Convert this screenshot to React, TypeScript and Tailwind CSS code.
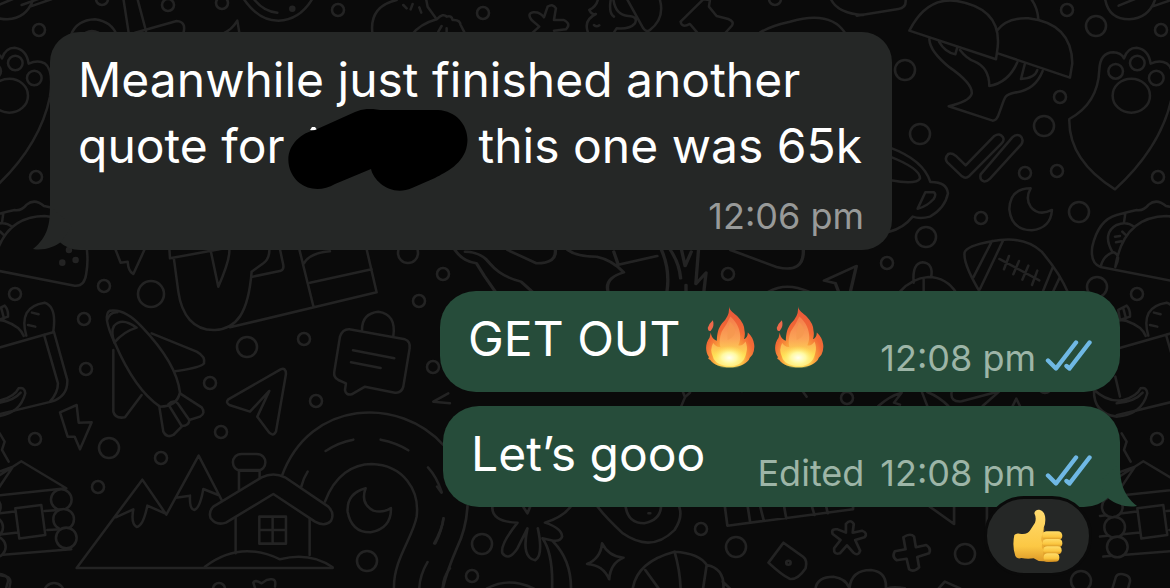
import { ReactNode } from "react";
import clsx from "clsx";

const DOTS = [
  [39, 30, 6], [102, -1, 6], [168, 5, 6], [222, 3, 6], [338, 10, 6], [36, 177, 6],
  [104, 286, 6], [15, 294, 6], [151, 294, 13], [84, 319, 6], [86, 369, 6], [35, 439, 6],
  [109, 448, 10], [161, 458, 6], [98, 487, 6], [247, 347, 10], [304, 339, 6], [210, 383, 6],
  [221, 432, 6], [316, 401, 6], [408, 253, 10], [443, 274, 6], [419, 301, 6], [433, 367, 6],
  [367, 561, 10], [54, 593, 10], [219, 589, 6], [482, 544, 10], [472, 576, 6], [701, 529, 6],
  [736, 547, 10], [965, 554, 10], [483, 13, 6], [775, -1, 6], [728, 274, 6], [847, 398, 6],
  [1067, 10, 6], [1096, 26, 10], [905, 70, 10], [1060, 97, 6], [1044, 126, 10], [920, 134, 10],
  [1025, 173, 6], [1057, 171, 6], [981, 218, 6], [1079, 212, 10], [926, 237, 10], [887, 263, 6],
  [1097, 287, 10], [1137, 294, 6], [1157, 439, 6], [1161, 30, 6], [1158, 177, 6], [1081, 581, 10],
  [742, 385, 6], [1045, 387, 6],
];

// doodles that sit on the seam of the tile, so they are drawn on both edges
const SeamDoodles = () => (
  <g>
    {/* paw */}
    <path d="M628 357Q714 310 718 210Q720 158 760 157Q783 158 792 175Q802 143 830 143Q866 148 872 191Q900 178 920 190Q948 210 936 290Q905 440 765 568Q625 480 628 357Z" />
    <circle cx="767" cy="214" r="22" />
    <circle cx="832" cy="189" r="22" />
    <circle cx="889" cy="234" r="22" />
    <ellipse cx="814" cy="287" rx="56" ry="51" />
    <path d="M735 -5Q745 58 808 58Q865 55 885 0M776 17L830 -5M876 20L940 -2" />
    {/* taco */}
    <path d="M722 801Q690 790 697 740Q715 660 770 645Q795 638 830 630Q850 634 866 614Q890 594 918 618Q960 625 1010 650M722 801L1010 857Q1040 860 1045 820Q1052 780 1045 735M766 801Q790 650 920 648Q990 655 1030 710M722 801Q730 765 760 757Q785 765 766 801M796 640L792 668M758 757Q725 700 770 675Q800 662 822 680M765 710L780 708M787 695L796 704M768 727L784 724" />
    <circle cx="973" cy="788" r="6" fill="#232323" />
    <circle cx="1013" cy="780" r="6" fill="#232323" />
    <circle cx="993" cy="750" r="6" fill="#232323" />
    {/* grocery bag */}
    <path d="M600 1095L948 996L988 1140Q990 1190 940 1205L770 1246M918 1004L960 1150Q960 1180 935 1206M865 1007Q840 920 920 908Q957 920 946 995M882 938L902 943M870 975L892 980M857 1008Q848 980 800 963Q750 950 715 1018M775 930L800 917Q812 930 810 950L780 960ZM790 925L798 955" />
    <path d="M700 1168Q745 1210 790 1200Q830 1190 842 1165Q860 1160 862 1180Q845 1245 770 1250Q700 1240 702 1170M770 1210Q825 1205 848 1178M780 1190L766 1130" />
    {/* steam and cabin */}
    <path d="M785 1300L800 1325L792 1350L812 1385M720 1438L825 1400L785 1460M700 1480L850 1384L985 1465L710 1494M720 1548L830 1535M920 1533L965 1530M720 1610L840 1598M928 1590L970 1588M730 1670L1000 1648M832 1525L910 1515L922 1605L844 1616Z" />
    {[
      [757, 1521], [764, 1582], [772, 1641], [970, 1499], [977, 1558], [985, 1614],
    ].map(([cx, cy]) => (
      <circle key={cy} cx={cx} cy={cy} r="31" fill="#0a0a0a" />
    ))}
    <path d="M756 1770L768 1730Q775 1718 797 1725Q812 1730 810 1745L800 1780" />
  </g>
);

const Wallpaper = () => (
  <svg
    aria-hidden="true"
    className="absolute left-0 top-0 h-[588px] w-[1170px]"
    viewBox="0 0 1170 588"
    fill="none"
    stroke="#232323"
    strokeWidth="2.6"
    strokeLinecap="round"
    strokeLinejoin="round"
  >
    {DOTS.map(([cx, cy, r]) => (
      <circle key={`${cx}-${cy}`} cx={cx} cy={cy} r={r} />
    ))}
    <g strokeWidth="7.6">
      <g transform="translate(860 0) scale(.3333)">
        <SeamDoodles />
        {/* mushrooms */}
        <path d="M148 92Q200 -10 290 3Q425 25 413 142L408 178ZM410 93Q440 52 505 55Q635 70 637 190L630 233L416 161M208 118Q210 155 270 203Q340 252 335 282Q328 305 266 319L398 362Q411 362 418 338C435 295 430 285 462 278Q525 272 548 213M300 150Q320 176 343 184Q388 203 388 258Q445 248 472 187M237 125Q255 157 286 163L291 145M494 194L483 237Q525 235 532 210M512 -5Q532 20 535 57" />
        {/* double check */}
        <path d="M262 487Q252 475 265 462Q275 458 287 467L317 496L403 408Q419 397 429 412Q434 421 425 430L328 528Q317 538 306 529ZM362 523Q358 540 371 544Q380 546 390 536L484 433Q493 418 481 408Q468 401 457 412Z" />
        {/* moon */}
        <path d="M512 565Q450 565 448 628Q455 690 515 691Q572 685 576 630Q535 650 512 620Q495 595 512 565Z" />
        {/* tea cup */}
        <path d="M90 443Q190 480 211 546Q260 545 264 580Q255 625 210 650Q180 658 158 650Q130 685 88 695M90 470Q180 505 180 535Q170 555 92 541M196 577H222Q230 582 221 597Q200 620 173 626Z" />
        {/* football */}
        <path d="M362 880Q308 790 314 757Q320 738 395 724Q490 705 545 755Q600 820 625 880M340 832L396 723M360 867L429 722M548 876L579 800M577 880L599 833M418 777L538 841M447 768L432 808M477 783L460 823M505 797L487 839M532 812L516 855" />
        <path d="M161 848Q156 790 188 787Q220 790 214 830M120 875Q155 835 205 831Q260 832 290 880M191 838V880" />
        <path d="M-10 47L115 27Q139 24 137 0" />
      </g>
      <g transform="translate(-262 0) scale(.3333)">
        <SeamDoodles />
      </g>
      <g transform="scale(.3333)">
        {/* top edge */}
        <path d="M213 105Q230 60 285 58Q335 65 350 105M258 98Q275 88 295 98M370 -5L386 98M412 -5L438 93M405 98L530 63Q560 65 550 100M670 100Q695 90 712 62L718 98M730 -5Q775 62 835 62Q900 60 938 -5M760 -5Q790 35 832 38M1118 105Q1105 20 1190 0M65 15L120 -5" />
        <circle cx="877" cy="26" r="6" fill="#232323" />
        <path d="M1235 105Q1260 72 1310 58L1283 20L1278 -5M1310 58Q1330 38 1340 50Q1355 45 1358 60Q1380 58 1382 75L1395 100M1210 15L1220 25M1238 12L1232 28M1258 22L1264 38M1325 78L1315 95M1340 85V98" />
        <path d="M1598 98L1618 80L1595 60Q1580 40 1600 37Q1620 35 1632 52L1643 20Q1660 10 1668 25L1662 60H1692Q1715 72 1698 88L1662 92" />
        <path d="M1795 -5Q1790 20 1768 30Q1775 45 1788 42Q1750 60 1764 97M1782 75Q1790 82 1798 76M1833 -5Q1825 40 1842 50M1840 -5Q1845 45 1885 48Q1915 50 1905 70Q1890 88 1850 85L1842 97M1880 -5L1930 85Q1940 98 1950 90Q1995 55 1980 0" />
        <path d="M2092 98L2070 72Q2045 85 2042 65L2110 -2L2130 0L2127 20L2150 48L2185 57Q2205 65 2195 78L2175 100M2280 98Q2310 78 2370 65Q2490 30 2535 98M2492 -5Q2510 40 2590 45" />
      </g>
      <g transform="translate(0 240) scale(.3333)">
        {/* below the first bubble */}
        <path d="M345 25L362 68L383 65Q385 95 400 102L434 28M508 25L510 55L690 22M522 58L535 155C545 225 580 272 645 270C710 266 745 220 755 95M633 36L655 140Q690 60 688 30M755 95L790 70Q810 55 808 25M758 110L843 92Q852 88 850 75L840 28M690 262L1130 157L1100 28M898 28L940 198M912 70Q930 38 990 34M930 128L1115 88" />
        {/* rocket */}
        <path d="M455 280L590 335Q617 350 612 370Q605 382 525 394M340 330V515Q345 537 375 532L425 465M478 500L490 575Q500 595 520 585L545 560M540 460L605 502Q618 520 600 530L568 540" />
        <path fill="#0a0a0a" d="M345 310Q305 225 330 212Q375 205 425 260Q530 370 540 458Q530 500 480 500Q405 450 345 310Z" />
        <path d="M321 240Q330 215 352 217M343 308Q370 275 410 263Q365 230 342 258Q332 275 343 308M505 493Q520 478 533 490L568 540Q568 558 545 558Z" />
        {/* paper plane */}
        <path d="M685 478L842 388Q858 382 858 402L828 575Q820 590 808 578L772 530L808 453L750 515L688 495Q676 488 685 478Z" />
        {/* note */}
        <path d="M1086 270Q1086 220 1135 215Q1190 222 1180 290M1048 268L1215 298Q1232 304 1229 325L1210 440Q1205 460 1185 458L1095 440L1055 463Q1038 467 1035 450L1038 430L1015 420Q1000 412 1003 395L1020 290Q1028 267 1048 268ZM1059 331L1183 355M1053 367L1142 384" />
        {/* lightning */}
        <path d="M180 517L230 495L236 548L275 547L240 628L224 590H203Z" />
        {/* road */}
        <path d="M845 710C930 475 1200 470 1330 615M975 785C1005 705 1060 672 1115 672C1210 675 1260 750 1250 830C1240 890 1180 960 1182 1044M977 633Q1015 607 1060 599M1142 599Q1190 608 1225 631M904 740Q910 715 923 695M1284 682Q1310 710 1325 756M1330 836Q1325 875 1306 910M1283 966Q1260 1005 1258 1044M1350 985Q1330 1010 1328 1044" />
        {/* mountains and house */}
        <path d="M230 984L427 719L499 824L596 647L665 780M347 832L400 808Q392 850 410 861Q430 858 442 797L495 820M528 773L570 767Q568 808 583 810Q600 805 610 747L655 765M230 984H998" />
        <path fill="#0a0a0a" d="M717 750V690H779V730M725 642H770C805 642 805 692 770 692H725C690 692 690 642 725 642ZM707 830V940M929 830V945" />
        <path fill="#0a0a0a" d="M640 800L785 712Q820 695 855 712L985 800Q1005 820 993 843Q975 862 945 845L820 762L678 848Q650 858 632 835Q625 815 640 800Z" />
        <path d="M778 830H858V911H778ZM818 830V911M778 870H858M615 980Q720 900 840 958Q930 935 998 982M1097 745Q1040 760 1043 815Q1055 878 1112 877Q1175 865 1173 804Q1150 820 1120 812Q1080 790 1097 745Z" />
        <path d="M-10 1003L20 1010Q32 1013 31 1028L27 1050M765 1044L760 1028Q765 1018 785 1030L800 1020L812 1018Q830 1015 825 1040M1300 485L1345 460M1300 485L1350 490" />
      </g>
      <g transform="translate(430 480) scale(.357 .3333)">
        {/* palm, avocado and small shapes along the bottom */}
        <path d="M105 78Q102 145 75 205Q45 280 35 330M12 190Q35 145 38 115M20 20L32 38M175 78Q170 125 245 128Q195 195 203 220Q220 245 245 205L273 145Q255 235 295 241Q318 225 302 145M395 78Q375 110 322 128Q370 145 370 170Q365 185 345 182L315 175Q345 220 342 325M345 185Q395 240 395 325M262 82L273 100L280 82" />
        <path d="M468 78Q490 110 540 160Q620 220 685 150Q710 110 697 78M548 80Q555 130 600 130Q645 120 647 80M612 100H617M826 80L833 137L1185 88V78M890 80L897 128M925 80L935 122M992 80L998 116M1070 80L1077 105M1110 80L1114 100" />
        <path d="M482 190Q500 230 542 233Q505 250 502 298Q485 255 440 252Q478 235 482 190ZM568 325Q580 245 685 215Q755 220 775 255Q825 265 822 325M603 270L640 325M685 215Q700 270 702 325M775 255L765 325M820 305L840 325M160 325Q220 290 290 325" />
        <path d="M990 188L948 248Q985 285 1008 297Q1030 300 1052 265Q1058 240 1045 230ZM1165 132Q1178 115 1187 132L1184 158L1210 152Q1228 160 1217 172L1191 180L1205 212Q1200 230 1186 218L1168 196L1148 220Q1130 225 1132 205L1150 180L1128 162Q1122 145 1142 148L1165 158Z" />
        <circle cx="1004" cy="248" r="6" />
        <path d="M1326 172Q1345 158 1356 170L1361 202L1390 195Q1405 205 1398 220L1365 231L1370 262Q1355 278 1342 268L1335 236L1307 241Q1293 230 1302 214L1332 208ZM1080 325Q1085 290 1130 290Q1165 295 1175 325Q1180 270 1235 270Q1280 275 1277 325M1280 325Q1300 318 1330 325M1425 325L1442 305L1485 325M1400 80L1468 132V78M1560 78V190" />
      </g>
      <g transform="translate(240 240) scale(.446 .3333)">
        <path d="M482 30Q500 65 530 70L548 108L575 160M505 35Q540 35 560 70Q585 110 630 125L655 155M600 30L665 70Q710 70 707 30M735 30Q755 50 800 50Q835 60 860 97Q815 115 826 158M838 35L848 74L935 48M945 30Q965 90 957 158M965 30Q985 70 988 115M990 30L998 78L1012 35M1028 30L1022 132L1045 98L1040 155M1000 135V158M1100 30L1205 82Q1265 100 1263 30M1185 155Q1225 125 1275 155M1342 155L1335 130L1310 122L1382 78L1368 158" />
      </g>
      <g transform="translate(660 384) scale(.3333)">
        <path d="M68 22L75 40L64 66M76 38L90 26M428 22L440 38M655 66Q690 35 725 26L702 56L720 62M785 22L802 66M802 24Q840 40 865 66M875 24Q870 55 905 52L1018 22L968 66M1058 66L1069 44L1080 66" />
      </g>
    </g>
  </svg>
);

const Tail = ({ side }: { side: "left" | "right" }) => (
  <svg
    aria-hidden="true"
    viewBox="0 0 40 44"
    className={clsx(
      "absolute bottom-0 h-11 w-10",
      side === "left"
        ? "-left-[18px] text-[#252726]"
        : "-right-[18px] -scale-x-100 text-[#264c3a]"
    )}
  >
    <path fill="currentColor" d="M18 0C18 18 16 31 1 43C12 45 22 41 29 36L40 20Z" />
  </svg>
);

const Checks = () => (
  <svg
    role="img"
    aria-label="Read"
    viewBox="0 0 48 32"
    className="mb-1.5 ml-2 h-8 w-12 shrink-0"
    fill="none"
    stroke="#6fb8e4"
    strokeWidth="4.4"
    strokeLinecap="round"
    strokeLinejoin="round"
  >
    <path d="M4 20.5L12 28.5L32 2.5M22.5 26L25.5 28.5L45.5 2.5" />
  </svg>
);

const Fire = () => (
  <svg role="img" aria-label="Fire" viewBox="0 0 150 188" className="h-[62px] w-[50px]">
    <defs>
      <radialGradient id="flame" cx=".48" cy=".9" r=".85">
        <stop offset="0" stopColor="#ffe45c" />
        <stop offset=".3" stopColor="#fdb83f" />
        <stop offset=".62" stopColor="#f26a35" />
        <stop offset="1" stopColor="#e9573a" />
      </radialGradient>
      <linearGradient id="inner" x1="0" y1="0" x2="0" y2="1">
        <stop offset="0" stopColor="#f47b4a" />
        <stop offset=".45" stopColor="#fba457" />
        <stop offset=".8" stopColor="#ffe052" />
        <stop offset="1" stopColor="#fff19a" />
      </linearGradient>
      <radialGradient id="core">
        <stop offset="0" stopColor="#fffef0" />
        <stop offset=".45" stopColor="#fff9a0" />
        <stop offset="1" stopColor="#ffe75a" stopOpacity="0" />
      </radialGradient>
    </defs>
    <path
      fill="url(#flame)"
      d="M72 1C74 16 88 22 98 32Q119 54 119 75Q122 89 117 101Q129 96 129 80Q145 94 148 115Q151 130 143 148L135 157L132 164C119 180 100 186 75 186C46 186 26 179 15 164L9 160L11 155C-2 135 1 112 13 96L17 80C18 94 25 101 35 105C36 82 39 68 51 52Q75 30 72 1Z"
    />
    <path fill="#ee694a" d="M23 43Q29 60 17 75Q7 78 8 65Q11 54 23 43Z" />
    <path
      fill="url(#inner)"
      d="M76 32C92 46 103 64 105 83Q108 104 100 119Q112 123 122 108Q130 125 124 144Q116 180 77 182Q31 181 23 153Q13 132 24 112Q35 127 46 124Q40 105 50 77Q65 57 76 32Z"
    />
    <path fill="#f4984e" opacity=".65" d="M75 48Q64 78 68 103Q91 95 91 70Q86 58 75 48Z" />
    <ellipse cx="73" cy="157" rx="52" ry="36" fill="url(#core)" />
  </svg>
);

const ThumbsUp = () => (
  <svg aria-hidden="true" viewBox="0 0 150 160" className="h-[54px] w-[50px]">
    <defs>
      <linearGradient id="skin" x1="0" y1="0" x2="0" y2="1">
        <stop offset="0" stopColor="#ffdb70" />
        <stop offset=".7" stopColor="#fcc844" />
        <stop offset="1" stopColor="#dc9827" />
      </linearGradient>
      <linearGradient id="finger" x1="0" y1="0" x2="0" y2="1">
        <stop offset="0" stopColor="#ffdc68" />
        <stop offset=".6" stopColor="#fbc63f" />
        <stop offset="1" stopColor="#cf8a1d" />
      </linearGradient>
    </defs>
    <path
      fill="url(#skin)"
      d="M64 12Q66 0 79 1Q92 3 96 20Q99 38 93 53L91 68H128L132 151Q115 162 92 156Q75 157 62 147Q43 150 25 146Q13 150 7 140Q-3 110 4 77Q10 70 25 74Q44 76 52 62L66 40Q71 26 64 12Z"
    />
    <path fill="#d99425" opacity=".5" d="M90 74Q80 88 89 102Q82 114 93 123Q87 136 95 147L112 150V76Z" />
    <rect x="88" y="66" width="60" height="27" rx="13" fill="url(#finger)" />
    <rect x="89" y="89" width="59" height="25" rx="12" fill="url(#finger)" />
    <rect x="91" y="111" width="55" height="24" rx="12" fill="url(#finger)" />
    <rect x="92" y="132" width="47" height="25" rx="12" fill="url(#finger)" />
    <path d="M92 53Q94 64 90 72" stroke="#dda12e" strokeWidth="3" fill="none" opacity=".6" />
  </svg>
);

const Redaction = () => (
  <span className="relative inline-block h-4 w-[194px]">
    <svg
      aria-hidden="true"
      viewBox="0 0 180 84"
      className="absolute -bottom-[30px] left-1 h-[84px] w-[180px]"
    >
      <path d="M22 21L24 18H27L30 22Z" fill="#fff" />
      <path d="M27 21L67 3Q78 -2 92 1H150C170 2 182 19 179 36C176 55 158 63 147 69L124 79C104 88 86 73 83 60L47 75C28 86 6 78 1 57C-3 38 12 24 27 21Z" />
    </svg>
  </span>
);

type BubbleProps = {
  own?: boolean;
  tail?: boolean;
  className?: string;
  children: ReactNode;
};

const Bubble = ({ own, tail, className, children }: BubbleProps) => (
  <article
    className={clsx(
      "relative flex max-w-full px-7 pb-[14px] pt-[15px] text-white",
      own ? "self-end rounded-[36px] bg-[#264c3a]" : "self-start rounded-[30px] bg-[#252726]",
      className
    )}
  >
    {tail && <Tail side={own ? "right" : "left"} />}
    {children}
  </article>
);

const App = () => {
  return (
    <main className="relative min-h-screen overflow-hidden bg-[#0a0a0a] font-['Inter',sans-serif]">
      <Wallpaper />
      <section className="relative flex flex-col px-[50px] pb-20 pt-8">
        <Bubble tail className="w-[842px] flex-col">
          <p className="text-[48px] leading-[66px]">
            Meanwhile just finished another
            <br />
            quote for
            <Redaction />
            this one was 65k
          </p>
          <time className="mt-[17px] self-end text-[36px] leading-10 text-[#989a99]">
            12:06 pm
          </time>
        </Bubble>

        <Bubble own className="mt-[41px] w-[680px] items-end justify-between">
          <p className="mb-1.5 flex items-center text-[48px] leading-[66px]">
            GET OUT
            <span className="mb-1 ml-6 flex gap-[19px]">
              <Fire />
              <Fire />
            </span>
          </p>
          <div className="flex items-end text-[36px] leading-10 text-[#9db5a7]">
            <time>12:08 pm</time>
            <Checks />
          </div>
        </Bubble>

        <Bubble own tail className="mt-3.5 w-[677px] items-end justify-between">
          <p className="mb-1.5 text-[48px] leading-[66px]">Let’s gooo</p>
          <div className="flex items-end text-[36px] leading-10 text-[#9db5a7]">
            <span className="mr-4">Edited</span>
            <time>12:08 pm</time>
            <Checks />
          </div>
          <button
            type="button"
            aria-label="Thumbs up reaction"
            className="absolute -bottom-[69px] right-7 flex h-20 w-[108px] items-center justify-center rounded-full border-3 border-[#0a0a0a] bg-[#252726]"
          >
            <ThumbsUp />
          </button>
        </Bubble>
      </section>
    </main>
  );
};

export default App;
